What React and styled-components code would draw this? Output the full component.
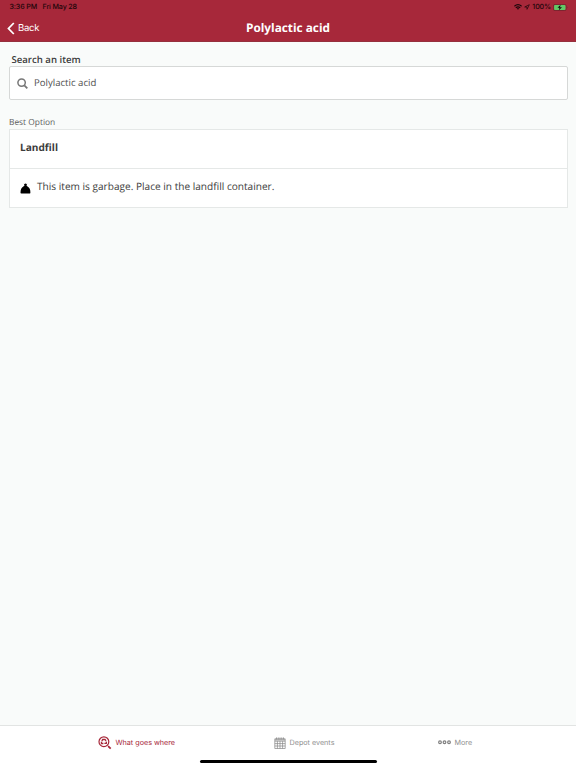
import React from 'react';
import styled, { createGlobalStyle } from 'styled-components';

const GlobalStyle = createGlobalStyle`
  * {
    box-sizing: border-box;
  }
  body {
    margin: 0;
    font-family: 'Open Sans', 'Noto Sans', sans-serif;
    color: #3c3c3c;
    text-rendering: geometricPrecision;
  }
`;

const Screen = styled.div`
  height: 100vh;
  display: flex;
  flex-direction: column;
  background-color: #f9fbfa;
`;

const Header = styled.header`
  height: 42px;
  background-color: #a7283a;
  border-bottom: 1px solid #96303d;
`;

const StatusBar = styled.div`
  height: 14px;
  padding: 0 8px 0 9.5px;
  display: flex;
  justify-content: space-between;
  align-items: center;
  font-family: Inter, sans-serif;
  font-size: 7.1px;
  line-height: 14px;
  font-weight: 500;
  letter-spacing: -0.13px;
  color: #1c060a;
`;

const StatusGroup = styled.div`
  display: flex;
  align-items: center;
  gap: ${({ $gap }) => $gap};
`;

const NavRow = styled.div`
  height: 27px;
  padding: 0 7px;
  display: grid;
  grid-template-columns: 1fr auto 1fr;
  align-items: center;
  color: white;
`;

const BackButton = styled.button`
  display: flex;
  align-items: center;
  gap: 3px;
  padding: 1px 0 0;
  border: none;
  background-color: transparent;
  color: white;
  font-family: Inter, sans-serif;
  font-size: 9.5px;
  line-height: 15px;
  letter-spacing: -0.25px;
  text-rendering: inherit;

  span {
    padding-top: 1px;
  }
`;

const Title = styled.h1`
  margin: 0;
  font-size: 11.8px;
  line-height: 16px;
  font-weight: 700;
`;

const Content = styled.main`
  flex: 1;
  padding: 12px 8.5px 0;
`;

const SearchLabel = styled.label`
  display: block;
  padding-left: 3px;
  font-size: 9.6px;
  line-height: 12px;
  font-weight: 600;
`;

const SearchBox = styled.div`
  height: 34px;
  padding-left: 7.5px;
  display: flex;
  align-items: center;
  gap: 6px;
  border: 1px solid #d6d8d7;
  border-radius: 2px;
  background-color: white;
`;

const SearchInput = styled.input`
  flex: 1;
  padding: 0;
  border: none;
  outline: none;
  font-family: inherit;
  font-size: 9.6px;
  line-height: 14px;
  color: #505050;
  text-rendering: inherit;
`;

const SectionLabel = styled.div`
  margin-top: 17px;
  padding-left: 0.5px;
  font-size: 8.4px;
  line-height: 12px;
  color: #606060;
`;

const Card = styled.section`
  border: 1px solid #e5e8e7;
  background-color: white;
`;

const CardRow = styled.div`
  height: ${({ $height }) => $height};
  padding: 0 10.5px 4px;
  display: flex;
  align-items: center;
  gap: 6px;
  font-size: 10.1px;
  line-height: 14px;
  font-weight: ${({ $bold }) => ($bold ? 700 : 400)};

  & + & {
    border-top: 1px solid #e5e8e7;
  }

  svg {
    margin-top: 4px;
  }
`;

const TabBar = styled.nav`
  height: 43px;
  padding-top: 1px;
  display: flex;
  flex-direction: column;
  align-items: center;
  border-top: 1px solid #e2e4e3;
  background-color: white;
`;

const Tabs = styled.div`
  width: 100%;
  height: 31px;
  padding-left: 98px;
  display: flex;
  align-items: center;
`;

const Tab = styled.div`
  width: ${({ $width }) => $width};
  display: flex;
  align-items: center;
  gap: 3.5px;
  font-family: Inter, sans-serif;
  font-size: 7.2px;
  line-height: 10px;
  white-space: nowrap;
  color: ${({ $active }) => ($active ? '#a7283a' : '#909090')};
`;

const HomeIndicator = styled.div`
  width: 177px;
  height: 3px;
  margin-top: 2px;
  border-radius: 2px;
  background-color: black;
`;

const WifiIcon = () => (
  <svg width="8" height="6" viewBox="0 0 8 6" fill="none" stroke="currentColor" strokeWidth="1.2">
    <path d="M.4 2.2Q4-.9 7.6 2.2M1.8 3.7q2.2-1.8 4.4 0" />
    <path d="M2.8 4.5q1.2-.9 2.4 0L4 5.8z" fill="currentColor" stroke="none" />
  </svg>
);

const LocationIcon = () => (
  <svg width="6" height="6" viewBox="0 0 6 6" fill="none" stroke="currentColor" strokeWidth=".7">
    <path d="M.7 3 5.3.7 3 5.3V3z" />
  </svg>
);

const BatteryIcon = () => (
  <svg width="15" height="7" viewBox="0 0 15 7">
    <rect x=".4" y=".4" width="12.8" height="6.2" rx="1.6" fill="none" stroke="#64252b" strokeWidth=".7" />
    <rect x="1.1" y="1.1" width="11.4" height="4.8" rx=".9" fill="#62c866" />
    <path d="M14 2.4q1 .9 0 2.1z" fill="#64252b" />
    <path d="M7.6.8 4.5 3.8h2L5.8 6.2l3.2-3H7z" fill="#150a0a" />
  </svg>
);

const BackIcon = () => (
  <svg width="8" height="13" viewBox="0 0 8 13" fill="none" stroke="currentColor" strokeWidth="1.8">
    <path d="M6.8 1 1.5 6.5 6.8 12" />
  </svg>
);

const SearchIcon = () => (
  <svg width="11" height="11" viewBox="0 0 11 11" fill="none" stroke="#777" strokeWidth="1.5">
    <circle cx="4.6" cy="4.6" r="3.7" />
    <path d="m7.3 7.3 3 3" strokeWidth="1.8" />
  </svg>
);

const GarbageIcon = () => (
  <svg width="11" height="11" viewBox="0 0 11 11" fill="black">
    <path d="M3.8.8 4.9 1.1 5.4.2 6 1l1.2-.2-.8 1.5 1.1 1.2c2 .9 3 3 2.9 6.2q-.1.9-1 .9H1.3q-.8 0-.8-.8c0-3.2.9-5.4 2.9-6.3l1.2-1.2z" />
  </svg>
);

const WhatGoesIcon = () => (
  <svg width="14" height="14" viewBox="0 0 14 14" fill="none" stroke="currentColor">
    <circle cx="5.9" cy="5.7" r="4.9" strokeWidth="1.2" />
    <path d="M3.8 5.2 4.7 3.5h2.4L8 5M8.4 5.6 8.3 7.3H6.4M5.4 7.5H3.5l-.1-1.7" strokeWidth="1.3" />
    <path d="m9.3 9 1.2 1.2" strokeWidth=".8" />
    <path d="m10.1 10.1 2.6 2.5" strokeWidth="1.8" />
  </svg>
);

const CalendarIcon = () => (
  <svg width="12" height="12" viewBox="0 0 12 12" fill="none" stroke="#858585" strokeWidth=".7">
    <path d="M.8 1.8h10.4v9.7H.8zM.8 4.2h10.4M.8 6.6h10.4M.8 9h10.4M3.4 4.2v7.3M6 4.2v7.3M8.6 4.2v7.3" />
    <path d="M1 2.9h10M2.7.4v2M4.9.4v2M7.1.4v2M9.3.4v2" strokeWidth=".9" />
  </svg>
);

const MoreIcon = () => (
  <svg width="13" height="5" viewBox="0 0 13 5" fill="none" stroke="#808080" strokeWidth="1.2">
    <circle cx="2" cy="2.3" r="1.35" />
    <circle cx="6.5" cy="2.3" r="1.35" />
    <circle cx="11" cy="2.3" r="1.35" />
  </svg>
);

const App = () => (
  <>
    <GlobalStyle />
    <Screen>
      <Header>
        <StatusBar>
          <StatusGroup $gap="5.5px">
            <span>3:36 PM</span>
            <span>Fri May 28</span>
          </StatusGroup>
          <StatusGroup $gap="2px">
            <WifiIcon />
            <LocationIcon />
            <span>100%</span>
            <BatteryIcon />
          </StatusGroup>
        </StatusBar>
        <NavRow>
          <BackButton type="button">
            <BackIcon />
            <span>Back</span>
          </BackButton>
          <Title>Polylactic acid</Title>
        </NavRow>
      </Header>
      <Content>
        <SearchLabel htmlFor="search">Search an item</SearchLabel>
        <SearchBox>
          <SearchIcon />
          <SearchInput id="search" defaultValue="Polylactic acid" />
        </SearchBox>
        <SectionLabel>Best Option</SectionLabel>
        <Card>
          <CardRow $height="38px" $bold>Landfill</CardRow>
          <CardRow $height="39px">
            <GarbageIcon />
            <span>This item is garbage. Place in the landfill container.</span>
          </CardRow>
        </Card>
      </Content>
      <TabBar>
        <Tabs>
          <Tab $width="176px" $active>
            <WhatGoesIcon />
            What goes where
          </Tab>
          <Tab $width="164px">
            <CalendarIcon />
            Depot events
          </Tab>
          <Tab $width="60px">
            <MoreIcon />
            More
          </Tab>
        </Tabs>
        <HomeIndicator />
      </TabBar>
    </Screen>
  </>
);

export default App;
